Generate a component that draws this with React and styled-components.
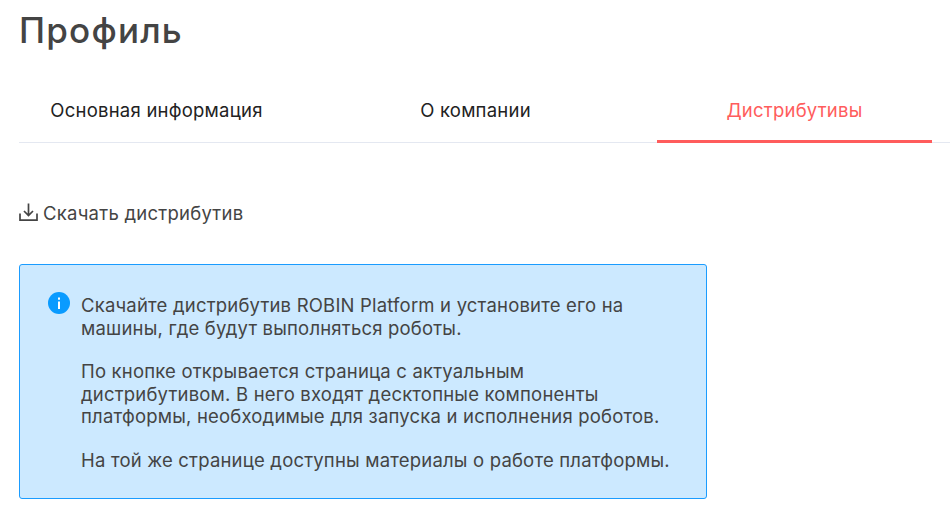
import React from 'react'
import styled, { createGlobalStyle } from 'styled-components'

const GlobalStyle = createGlobalStyle`
  html, body {
    margin: 0;
    padding: 0;
    background: #fff;
    font-family: Inter, "Noto Sans", sans-serif;
  }
`

const Page = styled.main`
  width: 950px;
  height: 521px;
  padding: 0 0 0 19px;
  box-sizing: border-box;
  overflow: hidden;
`

const Title = styled.h1`
  margin: 0;
  padding-top: 9px;
  font-size: 35px;
  line-height: 42px;
  font-weight: 500;
  letter-spacing: 1.2px;
  color: #444;
`

const TabBar = styled.nav`
  display: flex;
  gap: 44px;
  margin-top: 28px;
  height: 64px;
  box-sizing: border-box;
  border-bottom: 1px solid #e4e8f1;
`

const Tab = styled.div`
  width: 275px;
  height: 64px;
  box-sizing: border-box;
  padding-top: 10px;
  font-size: 18.5px;
  line-height: 42px;
  letter-spacing: 0.23px;
  text-align: center;
  color: ${(p) => (p.$active ? '#ff5c5c' : '#222')};
  border-bottom: 3px solid ${(p) => (p.$active ? '#ff5c5c' : 'transparent')};
`

const DownloadLink = styled.a`
  display: flex;
  align-items: center;
  gap: 5px;
  margin-top: 58px;
  height: 24px;
  font-size: 18.5px;
  letter-spacing: 0.25px;
  color: #444;
`

const DownloadIcon = styled.svg`
  flex: none;
  margin-top: -3px;
`

const InfoBox = styled.section`
  display: flex;
  gap: 11px;
  width: 688px;
  height: 235px;
  margin-top: 39px;
  padding: 27px 20px 0 28px;
  box-sizing: border-box;
  background: #cce9ff;
  border: 1px solid #1a9cff;
  border-radius: 3px;
`

const InfoIcon = styled.svg`
  flex: none;
  width: 22px;
  height: 22px;
`

const InfoText = styled.div`
  padding-top: 2px;
  font-size: 18.5px;
  line-height: 22.5px;
  letter-spacing: 0.19px;
  color: #444;
`

const Paragraph = styled.p`
  margin: 0 0 21px;
`

function App() {
  return (
    <>
      <GlobalStyle />
      <Page>
        <Title>Профиль</Title>
        <TabBar>
          <Tab>Основная информация</Tab>
          <Tab>О компании</Tab>
          <Tab $active>Дистрибутивы</Tab>
        </TabBar>
        <DownloadLink>
          <DownloadIcon width="19" height="18" viewBox="0 0 19 18" fill="none" stroke="#444" strokeWidth="1.7">
            <path d="M1 10.5v6.6h17v-6.6" />
            <path d="M9.5 .5v11.5M5 8l4.5 4.5L14 8" />
          </DownloadIcon>
          Скачать дистрибутив
        </DownloadLink>
        <InfoBox>
          <InfoIcon viewBox="0 0 22 22">
            <circle cx="11" cy="11" r="11" fill="#0a9bff" />
            <rect x="10" y="9.5" width="2" height="7.5" fill="#fff" />
            <rect x="10" y="5.5" width="2" height="2.2" fill="#fff" />
          </InfoIcon>
          <InfoText>
            <Paragraph>
              Скачайте дистрибутив ROBIN Platform и установите его на
              <br />
              машины, где будут выполняться роботы.
            </Paragraph>
            <Paragraph>
              По кнопке открывается страница с актуальным
              <br />
              дистрибутивом. В него входят десктопные компоненты
              <br />
              платформы, необходимые для запуска и исполнения роботов.
            </Paragraph>
            <Paragraph>На той же странице доступны материалы о работе платформы.</Paragraph>
          </InfoText>
        </InfoBox>
      </Page>
    </>
  )
}

export default App
